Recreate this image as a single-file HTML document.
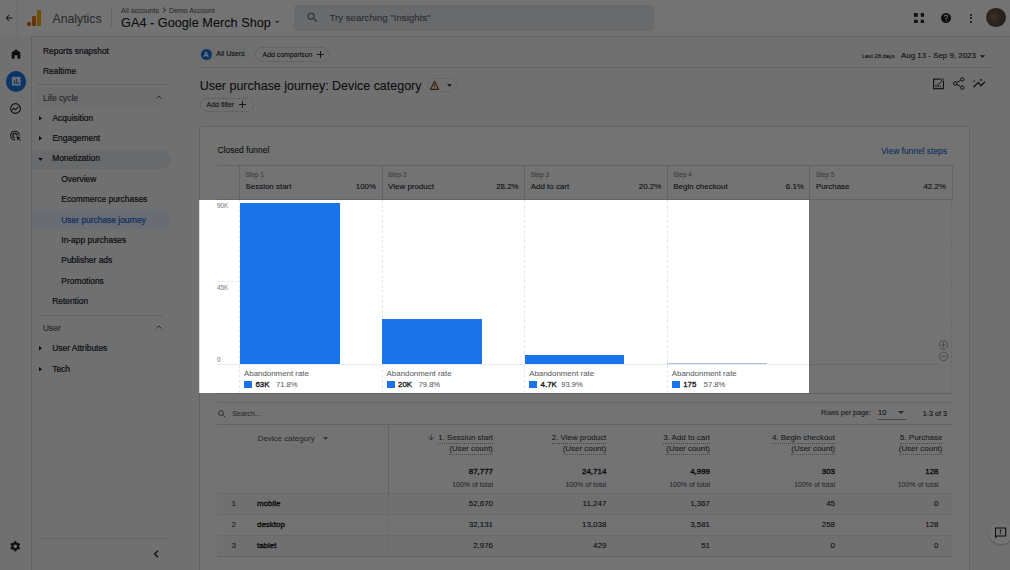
<!DOCTYPE html>
<html><head><meta charset="utf-8"><style>
html,body{margin:0;padding:0;width:1010px;height:570px;overflow:hidden;font-family:"Liberation Sans", sans-serif;}
.t{position:absolute;line-height:1;white-space:nowrap;-webkit-text-stroke:0.08px currentColor;}
.s{-webkit-text-stroke:0.2px currentColor;}
.m{-webkit-text-stroke:0.35px currentColor;}
.r{position:absolute;}
svg.r{display:block;}
</style></head><body>
<div class="r" style="left:0px;top:0px;width:1010px;height:570px;background:#f8f9fa"></div>
<div class="r" style="left:0px;top:0px;width:1010px;height:36.8px;background:#fff;border-bottom:1px solid #dadce0;box-sizing:border-box"></div>
<div class="r" style="left:17px;top:0px;width:1px;height:36px;background:#e8eaed"></div>
<div class="r" style="left:111px;top:9px;width:1px;height:18px;background:#dadce0"></div>
<div class="r" style="left:0px;top:36px;width:31px;height:534px;background:#f8f9fa"></div>
<div class="r" style="left:31px;top:36px;width:1px;height:534px;background:#dadce0"></div>
<svg class="r" style="left:4px;top:13px" width="10" height="10" viewBox="0 0 24 24"><path d="M20 11H7.83l5.59-5.59L12 4l-8 8 8 8 1.41-1.41L7.83 13H20v-2z" fill="#202124"/></svg>
<div class="r" style="left:26.8px;top:22px;width:3.8px;height:3.8px;background:#e37400;border-radius:1.2px"></div>
<div class="r" style="left:32px;top:15.8px;width:3.8px;height:10px;background:#e37400;border-radius:1.2px"></div>
<div class="r" style="left:37.4px;top:9.5px;width:3.8px;height:16.3px;background:#f9ab00;border-radius:1.2px"></div>
<div class="t " style="left:52.5px;top:12.63px;font-size:12.25px;color:#5f6368;font-weight:400;">Analytics</div>
<div class="t " style="left:121px;top:6.62px;font-size:7.07px;color:#5f6368;font-weight:400;">All accounts</div>
<svg class="r" style="left:161.5px;top:7px" width="5" height="6" viewBox="0 0 5 6"><path d="M1 .6L3.6 3 1 5.4" fill="none" stroke="#3c4043" stroke-width="1"/></svg>
<div class="t " style="left:168.9px;top:6.64px;font-size:7.04px;color:#5f6368;font-weight:400;">Demo Account</div>
<div class="t " style="left:121px;top:16.82px;font-size:12.73px;color:#202124;font-weight:400;">GA4 - Google Merch Shop</div>
<svg class="r" style="left:274.8px;top:21.2px" width="4.6" height="2.4" viewBox="0 0 10 5"><path d="M0 0l5 5 5-5z" fill="#5f6368"/></svg>
<div class="r" style="left:294px;top:5px;width:359.5px;height:26px;background:#e9ebee;border-radius:4px"></div>
<svg class="r" style="left:306px;top:11px" width="13" height="13" viewBox="0 0 24 24"><path d="M15.5 14h-.79l-.28-.27A6.47 6.47 0 0 0 16 9.5 6.5 6.5 0 1 0 9.5 16c1.61 0 3.09-.59 4.23-1.57l.27.28v.79l5 4.99L20.49 19l-4.99-5zm-6 0C7.01 14 5 11.99 5 9.5S7.01 5 9.5 5 14 7.01 14 9.5 11.99 14 9.5 14z" fill="#5f6368"/></svg>
<div class="t " style="left:329.5px;top:13.32px;font-size:9.66px;color:#5f6368;font-weight:400;">Try searching "Insights"</div>
<svg class="r" style="left:913.8px;top:12.8px" width="10.5" height="10.5" viewBox="0 0 10.5 10.5"><rect x="0" y="0" width="3.8" height="3.8" fill="#2b2d30"/><rect x="6.7" y="0" width="3.8" height="3.8" fill="#2b2d30"/><rect x="0" y="6.7" width="3.8" height="3.8" fill="#2b2d30"/><rect x="6.7" y="6.7" width="3.8" height="3.8" fill="#2b2d30"/></svg>
<svg class="r" style="left:940px;top:11.5px" width="12" height="12" viewBox="0 0 24 24"><path d="M12 2C6.48 2 2 6.48 2 12s4.48 10 10 10 10-4.48 10-10S17.52 2 12 2zm1 17h-2v-2h2v2zm2.07-7.75l-.9.92C13.45 12.9 13 13.5 13 15h-2v-.5c0-1.1.45-2.1 1.17-2.83l1.24-1.26c.37-.36.59-.86.59-1.41 0-1.1-.9-2-2-2s-2 .9-2 2H8c0-2.21 1.79-4 4-4s4 1.79 4 4c0 .88-.36 1.68-.93 2.25z" fill="#202124"/></svg>
<div class="r" style="left:969.8px;top:13.5px;width:2.2px;height:2.2px;background:#202124;border-radius:50%"></div>
<div class="r" style="left:969.8px;top:17.3px;width:2.2px;height:2.2px;background:#202124;border-radius:50%"></div>
<div class="r" style="left:969.8px;top:21.1px;width:2.2px;height:2.2px;background:#202124;border-radius:50%"></div>
<div class="r" style="left:986.2px;top:7.6px;width:19.4px;height:19.4px;background:radial-gradient(circle at 40% 45%,#8a6a50 0%,#6a5040 35%,#504846 65%,#5a6068 100%);border-radius:50%;filter:blur(0.4px)"></div>
<svg class="r" style="left:9.5px;top:47.8px" width="12" height="12" viewBox="0 0 24 24"><path d="M12 2.5L3.5 9v12.5h5.5v-7h6v7h5.5V9z" fill="#202124"/></svg>
<div class="r" style="left:5.5px;top:71px;width:20.5px;height:20.5px;background:#1a73e8;border-radius:50%"></div>
<svg class="r" style="left:10.5px;top:75.5px" width="10.5" height="10.5" viewBox="0 0 24 24"><path d="M2 2h20v20H2z" fill="#e8f0fe"/><path d="M6.5 10h2.5v8H6.5zm4.5-4h2.5v12H11zm4.5 8.5H18V18h-2.5z" fill="#1a73e8"/></svg>
<svg class="r" style="left:9px;top:102px" width="13" height="13" viewBox="0 0 24 24"><path d="M12 2a10 10 0 1 0 0 20 10 10 0 0 0 0-20zm0 18a8 8 0 1 1 0-16 8 8 0 0 1 0 16z" fill="#202124"/><path d="M5 14l4-4 3 3 5-5 1.4 1.4L12 15.8l-3-3-2.6 2.6z" fill="#202124"/></svg>
<svg class="r" style="left:9px;top:129px" width="13" height="13" viewBox="0 0 24 24"><path d="M11 21a9 9 0 1 1 9-9h-2a7 7 0 1 0-7 7zm0-4a5 5 0 1 1 5-5h-2a3 3 0 1 0-3 3zm3-4l8 3-3.5 1.5L22 21l-1 1-3.5-3.5L16 22z" fill="#202124"/></svg>
<svg class="r" style="left:9.3px;top:540.3px" width="12.5" height="12.5" viewBox="0 0 24 24"><path d="M19.14 12.94c.04-.3.06-.61.06-.94 0-.32-.02-.64-.07-.94l2.03-1.58a.49.49 0 0 0 .12-.61l-1.92-3.32a.488.488 0 0 0-.59-.22l-2.39.96c-.5-.38-1.03-.7-1.62-.94l-.36-2.54a.484.484 0 0 0-.48-.41h-3.84c-.24 0-.43.17-.47.41l-.36 2.54c-.59.24-1.13.57-1.62.94l-2.39-.96c-.22-.08-.47 0-.59.22L2.74 8.87c-.12.21-.08.47.12.61l2.03 1.58c-.05.3-.09.63-.09.94s.02.64.07.94l-2.03 1.58a.49.49 0 0 0-.12.61l1.92 3.32c.12.22.37.29.59.22l2.39-.96c.5.38 1.03.7 1.62.94l.36 2.54c.05.24.24.41.48.41h3.84c.24 0 .44-.17.47-.41l.36-2.54c.59-.24 1.13-.56 1.62-.94l2.39.96c.22.08.47 0 .59-.22l1.92-3.32c.12-.22.07-.47-.12-.61l-2.01-1.58zM12 15.6c-1.98 0-3.6-1.62-3.6-3.6s1.62-3.6 3.6-3.6 3.6 1.62 3.6 3.6-1.62 3.6-3.6 3.6z" fill="#202124"/></svg>
<div class="t s" style="left:43px;top:46.67px;font-size:8.42px;color:#202124;font-weight:400;">Reports snapshot</div>
<div class="t s" style="left:43px;top:67.07px;font-size:8.42px;color:#202124;font-weight:400;">Realtime</div>
<div class="r" style="left:37px;top:84px;width:130px;height:1px;background:#dadce0"></div>
<div class="r" style="left:35px;top:88px;width:135px;height:19px;background:#f3f4f5;border-radius:0 10px 10px 0"></div>
<div class="t s" style="left:43px;top:93.87px;font-size:8.42px;color:#5f6368;font-weight:400;">Life cycle</div>
<svg class="r" style="left:155.5px;top:95px" width="6" height="4" viewBox="0 0 6 4"><path d="M.5 3.5L3 1l2.5 2.5" fill="none" stroke="#5f6368" stroke-width="1"/></svg>
<svg class="r" style="left:39.0px;top:116.0px" width="3" height="4.5" viewBox="0 0 3 4.5"><path d="M0 0l3 2.25-3 2.25z" fill="#202124"/></svg>
<div class="t s" style="left:52.5px;top:113.87px;font-size:8.42px;color:#202124;font-weight:400;">Acquisition</div>
<svg class="r" style="left:39.0px;top:136.0px" width="3" height="4.5" viewBox="0 0 3 4.5"><path d="M0 0l3 2.25-3 2.25z" fill="#202124"/></svg>
<div class="t s" style="left:52.5px;top:134.17px;font-size:8.42px;color:#202124;font-weight:400;">Engagement</div>
<div class="r" style="left:32px;top:149.5px;width:138.5px;height:19.5px;background:#e8eaed;border-radius:0 10px 10px 0"></div>
<svg class="r" style="left:37.7px;top:157.5px" width="5" height="3" viewBox="0 0 5 3"><path d="M0 0h5L2.5 2.8z" fill="#202124"/></svg>
<div class="t s" style="left:52.2px;top:154.27px;font-size:8.42px;color:#202124;font-weight:400;">Monetization</div>
<div class="t s" style="left:61.3px;top:174.67px;font-size:8.42px;color:#202124;font-weight:400;">Overview</div>
<div class="t s" style="left:61.3px;top:195.17px;font-size:8.42px;color:#202124;font-weight:400;">Ecommerce purchases</div>
<div class="r" style="left:32px;top:209.3px;width:138.5px;height:19.5px;background:#e8f0fe;border-radius:0 10px 10px 0"></div>
<div class="t s" style="left:61.3px;top:215.67px;font-size:8.42px;color:#1967d2;font-weight:400;">User purchase journey</div>
<div class="t s" style="left:61.3px;top:236.07px;font-size:8.42px;color:#202124;font-weight:400;">In-app purchases</div>
<div class="t s" style="left:61.3px;top:256.37px;font-size:8.42px;color:#202124;font-weight:400;">Publisher ads</div>
<div class="t s" style="left:61.3px;top:276.87px;font-size:8.42px;color:#202124;font-weight:400;">Promotions</div>
<div class="t s" style="left:52.2px;top:297.17px;font-size:8.42px;color:#202124;font-weight:400;">Retention</div>
<div class="r" style="left:40px;top:314.5px;width:123px;height:1px;background:#dadce0"></div>
<div class="t s" style="left:43px;top:323.87px;font-size:8.42px;color:#5f6368;font-weight:400;">User</div>
<svg class="r" style="left:155.5px;top:325.3px" width="6" height="4" viewBox="0 0 6 4"><path d="M.5 3.5L3 1l2.5 2.5" fill="none" stroke="#5f6368" stroke-width="1"/></svg>
<svg class="r" style="left:39.0px;top:346.0px" width="3" height="4.5" viewBox="0 0 3 4.5"><path d="M0 0l3 2.25-3 2.25z" fill="#202124"/></svg>
<div class="t s" style="left:52.2px;top:344.27px;font-size:8.42px;color:#202124;font-weight:400;">User Attributes</div>
<svg class="r" style="left:39.0px;top:366.5px" width="3" height="4.5" viewBox="0 0 3 4.5"><path d="M0 0l3 2.25-3 2.25z" fill="#202124"/></svg>
<div class="t s" style="left:52.2px;top:364.67px;font-size:8.42px;color:#202124;font-weight:400;">Tech</div>
<div class="r" style="left:40px;top:538px;width:128px;height:1px;background:#dadce0"></div>
<svg class="r" style="left:153px;top:549.8px" width="6" height="8" viewBox="0 0 6 8"><path d="M5 .7L1.6 4 5 7.3" fill="none" stroke="#202124" stroke-width="1.3"/></svg>
<div class="r" style="left:198px;top:47px;width:52px;height:14.5px;background:#f1f3f4;border-radius:8px"></div>
<div class="r" style="left:200.5px;top:49px;width:11px;height:11px;background:#1a73e8;border-radius:50%"></div>
<div class="t " style="left:203.2px;top:50.85px;font-size:7.5px;color:#fff;font-weight:700;">A</div>
<div class="t " style="left:216.3px;top:51.49px;font-size:7.1px;color:#202124;font-weight:400;">All Users</div>
<div class="r" style="left:255px;top:47px;width:73.5px;height:14.5px;border:1px dotted #bdc1c6;border-radius:8px;box-sizing:border-box"></div>
<div class="t " style="left:262.6px;top:51.96px;font-size:6.9px;color:#202124;font-weight:400;">Add comparison</div>
<svg class="r" style="left:316px;top:50px" width="9" height="9" viewBox="0 0 9 9"><path d="M4.5 1v7M1 4.5h7" stroke="#202124" stroke-width=".9"/></svg>
<div class="t " style="left:861.9px;top:53.57px;font-size:5.82px;color:#202124;font-weight:400;">Last 28 days</div>
<div class="t " style="left:901px;top:52.49px;font-size:7.93px;color:#202124;font-weight:400;">Aug 13 - Sep 9, 2023</div>
<svg class="r" style="left:980px;top:54.5px" width="5" height="3" viewBox="0 0 10 5"><path d="M0 0l5 5 5-5z" fill="#202124"/></svg>
<div class="r" style="left:198px;top:66.5px;width:793px;height:1px;background:#dadce0"></div>
<div class="t " style="left:199.7px;top:80.24px;font-size:12.48px;color:#202124;font-weight:400;">User purchase journey: Device category</div>
<div class="r" style="left:426.5px;top:77.5px;width:30.5px;height:14.5px;border:1px solid #e3e5e8;border-radius:7px;box-sizing:border-box"></div>
<svg class="r" style="left:428px;top:79px" width="13" height="12" viewBox="428 79 13 12"><path d="M434.6 81.2L430.6 89.3h8z" fill="#f6efe6" stroke="#8a4f1a" stroke-width="1.2" stroke-linejoin="round"/><path d="M434.6 84.2v2.6M434.6 87.5v.8" stroke="#8a4f1a" stroke-width="1"/></svg>
<svg class="r" style="left:446.7px;top:84px" width="5" height="3" viewBox="0 0 10 5"><path d="M0 0l5 5 5-5z" fill="#202124"/></svg>
<div class="r" style="left:199.7px;top:97.7px;width:54px;height:14px;border:1px dotted #bdc1c6;border-radius:8px;box-sizing:border-box"></div>
<div class="t " style="left:206.5px;top:101.27px;font-size:7.0px;color:#202124;font-weight:400;">Add filter</div>
<svg class="r" style="left:238px;top:100px" width="9" height="9" viewBox="0 0 9 9"><path d="M4.5 1v7M1 4.5h7" stroke="#202124" stroke-width=".9"/></svg>
<svg class="r" style="left:925px;top:70px" width="70" height="28" viewBox="925 70 70 28"><rect x="933.6" y="79.1" width="9.8" height="9.6" fill="none" stroke="#202124" stroke-width="1.1"/><path d="M936 87.2v-2.6M938.2 87.2v-4M940.4 87.2v-1.4" stroke="#202124" stroke-width="1"/><path d="M938.6 84.2L943.8 78.4" stroke="#f8f9fa" stroke-width="2.4"/><path d="M938.9 84L943.8 78.5" stroke="#202124" stroke-width="1"/><path d="M960.6 80.4L956.9 82.5M956.9 84.5L960.6 86.6" stroke="#202124" stroke-width="1"/><circle cx="962.3" cy="79.4" r="1.7" fill="none" stroke="#202124" stroke-width="1"/><circle cx="955.2" cy="83.5" r="1.7" fill="none" stroke="#202124" stroke-width="1"/><circle cx="962.3" cy="87.6" r="1.7" fill="none" stroke="#202124" stroke-width="1"/><path d="M973.5 87.3L978.4 82.4L981 85.8L985 81.6" fill="none" stroke="#202124" stroke-width="1.3"/><path d="M974.2 80.3v1.6M973.4 81.1h1.6" stroke="#202124" stroke-width=".6"/><path d="M981.1 78.8v2.4M979.9 80h2.4" stroke="#202124" stroke-width=".8"/></svg>
<div class="r" style="left:199px;top:126px;width:770.5px;height:460px;background:#fff;border:1px solid #dadce0;border-radius:3px;box-sizing:border-box"></div>
<div class="t " style="left:217.4px;top:146.30px;font-size:8.5px;color:#202124;font-weight:400;">Closed funnel</div>
<div class="t " style="right:63px;top:146.66px;font-size:8.44px;color:#1967d2;font-weight:400;">View funnel steps</div>
<div class="r" style="left:216.6px;top:165px;width:735.5px;height:1px;background:#dadce0"></div>
<div class="r" style="left:216.6px;top:199px;width:735.5px;height:1px;background:#dadce0"></div>
<div class="r" style="left:239px;top:165px;width:1px;height:34px;background:#dadce0"></div>
<div class="r" style="left:381.6px;top:165px;width:1px;height:34px;background:#dadce0"></div>
<div class="r" style="left:524.2px;top:165px;width:1px;height:34px;background:#dadce0"></div>
<div class="r" style="left:666.8px;top:165px;width:1px;height:34px;background:#dadce0"></div>
<div class="r" style="left:809.4px;top:165px;width:1px;height:34px;background:#dadce0"></div>
<div class="r" style="left:951.5px;top:165px;width:1px;height:34px;background:#dadce0"></div>
<div class="t " style="left:245.5px;top:172.38px;font-size:6.4px;color:#80868b;font-weight:400;">Step 1</div>
<div class="t " style="left:245.5px;top:182.86px;font-size:7.96px;color:#202124;font-weight:400;">Session start</div>
<div class="t " style="right:633.9px;top:182.86px;font-size:7.96px;color:#202124;font-weight:400;">100%</div>
<div class="t " style="left:388.1px;top:172.38px;font-size:6.4px;color:#80868b;font-weight:400;">Step 2</div>
<div class="t " style="left:388.1px;top:182.86px;font-size:7.96px;color:#202124;font-weight:400;">View product</div>
<div class="t " style="right:491.29999999999995px;top:182.86px;font-size:7.96px;color:#202124;font-weight:400;">28.2%</div>
<div class="t " style="left:530.7px;top:172.38px;font-size:6.4px;color:#80868b;font-weight:400;">Step 3</div>
<div class="t " style="left:530.7px;top:182.86px;font-size:7.96px;color:#202124;font-weight:400;">Add to cart</div>
<div class="t " style="right:348.70000000000005px;top:182.86px;font-size:7.96px;color:#202124;font-weight:400;">20.2%</div>
<div class="t " style="left:673.3px;top:172.38px;font-size:6.4px;color:#80868b;font-weight:400;">Step 4</div>
<div class="t " style="left:673.3px;top:182.86px;font-size:7.96px;color:#202124;font-weight:400;">Begin checkout</div>
<div class="t " style="right:206.10000000000002px;top:182.86px;font-size:7.96px;color:#202124;font-weight:400;">6.1%</div>
<div class="t " style="left:815.9px;top:172.38px;font-size:6.4px;color:#80868b;font-weight:400;">Step 5</div>
<div class="t " style="left:815.9px;top:182.86px;font-size:7.96px;color:#202124;font-weight:400;">Purchase</div>
<div class="t " style="right:64.0px;top:182.86px;font-size:7.96px;color:#202124;font-weight:400;">42.2%</div>
<div class="r" style="left:239px;top:200px;width:0px;height:193px;border-left:1px dashed #e6e8eb"></div>
<div class="r" style="left:381.6px;top:200px;width:0px;height:193px;border-left:1px dashed #e6e8eb"></div>
<div class="r" style="left:524.2px;top:200px;width:0px;height:193px;border-left:1px dashed #e6e8eb"></div>
<div class="r" style="left:666.8px;top:200px;width:0px;height:193px;border-left:1px dashed #e6e8eb"></div>
<div class="r" style="left:809.4px;top:200px;width:0px;height:193px;border-left:1px dashed #e6e8eb"></div>
<div class="r" style="left:951px;top:200px;width:0px;height:193px;border-left:1px dashed #e6e8eb"></div>
<div class="r" style="left:216.6px;top:392.5px;width:736px;height:1px;background:#dadce0"></div>
<div class="r" style="left:216.6px;top:364px;width:722px;height:1px;background:#e8eaed"></div>
<div class="r" style="left:216.6px;top:281.4px;width:22px;height:0px;border-top:1px dashed #e6e8eb"></div>
<div class="t " style="left:217px;top:203.38px;font-size:6.4px;color:#80868b;font-weight:400;">90K</div>
<div class="t " style="left:217px;top:285.38px;font-size:6.4px;color:#80868b;font-weight:400;">45K</div>
<div class="t " style="left:217px;top:357.38px;font-size:6.4px;color:#80868b;font-weight:400;">0</div>
<div class="r" style="left:240px;top:203.4px;width:99.5px;height:160.6px;background:#1a73e8"></div>
<div class="r" style="left:382.2px;top:318.8px;width:99.5px;height:45.19999999999999px;background:#1a73e8"></div>
<div class="r" style="left:524.8px;top:355.3px;width:99.5px;height:8.699999999999989px;background:#1a73e8"></div>
<div class="r" style="left:667.4px;top:363px;width:99.5px;height:1px;background:#a8c3ea"></div>
<div class="t " style="left:244px;top:370.31px;font-size:7.9px;color:#5f6368;font-weight:400;">Abandonment rate</div>
<div class="r" style="left:244px;top:380.6px;width:8px;height:7.6px;background:#1a73e8"></div>
<div class="t m" style="left:255.4px;top:381.11px;font-size:7.9px;color:#202124;font-weight:400;">63K</div>
<div class="t " style="left:276px;top:381.37px;font-size:7.6px;color:#5f6368;font-weight:400;">71.8%</div>
<div class="t " style="left:386.6px;top:370.31px;font-size:7.9px;color:#5f6368;font-weight:400;">Abandonment rate</div>
<div class="r" style="left:386.6px;top:380.6px;width:8px;height:7.6px;background:#1a73e8"></div>
<div class="t m" style="left:398.0px;top:381.11px;font-size:7.9px;color:#202124;font-weight:400;">20K</div>
<div class="t " style="left:418.6px;top:381.37px;font-size:7.6px;color:#5f6368;font-weight:400;">79.8%</div>
<div class="t " style="left:529.2px;top:370.31px;font-size:7.9px;color:#5f6368;font-weight:400;">Abandonment rate</div>
<div class="r" style="left:529.2px;top:380.6px;width:8px;height:7.6px;background:#1a73e8"></div>
<div class="t m" style="left:540.6px;top:381.11px;font-size:7.9px;color:#202124;font-weight:400;">4.7K</div>
<div class="t " style="left:561.2px;top:381.37px;font-size:7.6px;color:#5f6368;font-weight:400;">93.9%</div>
<div class="t " style="left:671.8px;top:370.31px;font-size:7.9px;color:#5f6368;font-weight:400;">Abandonment rate</div>
<div class="r" style="left:671.8px;top:380.6px;width:8px;height:7.6px;background:#1a73e8"></div>
<div class="t m" style="left:683.1999999999999px;top:381.11px;font-size:7.9px;color:#202124;font-weight:400;">175</div>
<div class="t " style="left:703.8px;top:381.37px;font-size:7.6px;color:#5f6368;font-weight:400;">57.8%</div>
<svg class="r" style="left:937px;top:339px" width="13" height="24" viewBox="937 339 13 24"><circle cx="943.5" cy="345" r="4.2" fill="none" stroke="#9aa0a6" stroke-width=".9"/><circle cx="943.5" cy="356.4" r="4.2" fill="none" stroke="#9aa0a6" stroke-width=".9"/><path d="M941 345h5M943.5 342.5v5M941 356.4h5" stroke="#9aa0a6" stroke-width=".9"/></svg>
<div class="r" style="left:217px;top:402px;width:735px;height:1px;background:#e3e5e8"></div>
<svg class="r" style="left:217px;top:409px" width="10" height="10" viewBox="0 0 24 24"><path d="M15.5 14h-.79l-.28-.27A6.47 6.47 0 0 0 16 9.5 6.5 6.5 0 1 0 9.5 16c1.61 0 3.09-.59 4.23-1.57l.27.28v.79l5 4.99L20.49 19l-4.99-5zm-6 0C7.01 14 5 11.99 5 9.5S7.01 5 9.5 5 14 7.01 14 9.5 11.99 14 9.5 14z" fill="#5f6368"/></svg>
<div class="t " style="left:232.2px;top:409.61px;font-size:7.2px;color:#5f6368;font-weight:400;">Search...</div>
<div class="t " style="left:821px;top:409.96px;font-size:7.14px;color:#3c4043;font-weight:400;">Rows per page:</div>
<div class="t " style="left:878px;top:408.85px;font-size:7.5px;color:#202124;font-weight:400;">10</div>
<svg class="r" style="left:897.5px;top:410.5px" width="6" height="3" viewBox="0 0 10 5"><path d="M0 0l5 5 5-5z" fill="#5f6368"/></svg>
<div class="r" style="left:877.5px;top:419px;width:28px;height:1px;background:#9aa0a6"></div>
<div class="t " style="right:63px;top:409.61px;font-size:7.2px;color:#202124;font-weight:400;">1-3 of 3</div>
<div class="r" style="left:217px;top:424px;width:735px;height:1px;background:#dadce0"></div>
<div class="r" style="left:388px;top:424px;width:1px;height:131.5px;background:#dadce0"></div>
<div class="t " style="left:257.7px;top:434.57px;font-size:7.95px;color:#5f6368;font-weight:400;">Device category</div>
<svg class="r" style="left:322.5px;top:437px" width="5" height="3" viewBox="0 0 10 5"><path d="M0 0l5 5 5-5z" fill="#5f6368"/></svg>
<div class="t " style="right:517px;top:434.08px;font-size:7.94px;color:#3c4043;font-weight:400;padding-bottom:1px;border-bottom:1px dotted #9aa0a6">1. Session start</div>
<div class="t " style="right:517px;top:445.18px;font-size:7.94px;color:#3c4043;font-weight:400;padding-bottom:1px;border-bottom:1px dotted #9aa0a6">(User count)</div>
<div class="t " style="right:403.70000000000005px;top:434.08px;font-size:7.94px;color:#3c4043;font-weight:400;padding-bottom:1px;border-bottom:1px dotted #9aa0a6">2. View product</div>
<div class="t " style="right:403.70000000000005px;top:445.18px;font-size:7.94px;color:#3c4043;font-weight:400;padding-bottom:1px;border-bottom:1px dotted #9aa0a6">(User count)</div>
<div class="t " style="right:300px;top:434.08px;font-size:7.94px;color:#3c4043;font-weight:400;padding-bottom:1px;border-bottom:1px dotted #9aa0a6">3. Add to cart</div>
<div class="t " style="right:300px;top:445.18px;font-size:7.94px;color:#3c4043;font-weight:400;padding-bottom:1px;border-bottom:1px dotted #9aa0a6">(User count)</div>
<div class="t " style="right:175px;top:434.08px;font-size:7.94px;color:#3c4043;font-weight:400;padding-bottom:1px;border-bottom:1px dotted #9aa0a6">4. Begin checkout</div>
<div class="t " style="right:175px;top:445.18px;font-size:7.94px;color:#3c4043;font-weight:400;padding-bottom:1px;border-bottom:1px dotted #9aa0a6">(User count)</div>
<div class="t " style="right:67.60000000000002px;top:434.08px;font-size:7.94px;color:#3c4043;font-weight:400;padding-bottom:1px;border-bottom:1px dotted #9aa0a6">5. Purchase</div>
<div class="t " style="right:67.60000000000002px;top:445.18px;font-size:7.94px;color:#3c4043;font-weight:400;padding-bottom:1px;border-bottom:1px dotted #9aa0a6">(User count)</div>
<svg class="r" style="left:426.5px;top:432.8px" width="8.5" height="9" viewBox="0 0 24 24"><path d="M20 12l-1.41-1.41L13 16.17V4h-2v12.17l-5.58-5.59L4 12l8 8 8-8z" fill="#5f6368"/></svg>
<div class="t m" style="right:517px;top:467.98px;font-size:7.94px;color:#202124;font-weight:400;">87,777</div>
<div class="t " style="right:517px;top:481.17px;font-size:7.0px;color:#5f6368;font-weight:400;">100% of total</div>
<div class="t m" style="right:403.70000000000005px;top:467.98px;font-size:7.94px;color:#202124;font-weight:400;">24,714</div>
<div class="t " style="right:403.70000000000005px;top:481.17px;font-size:7.0px;color:#5f6368;font-weight:400;">100% of total</div>
<div class="t m" style="right:300px;top:467.98px;font-size:7.94px;color:#202124;font-weight:400;">4,999</div>
<div class="t " style="right:300px;top:481.17px;font-size:7.0px;color:#5f6368;font-weight:400;">100% of total</div>
<div class="t m" style="right:175px;top:467.98px;font-size:7.94px;color:#202124;font-weight:400;">303</div>
<div class="t " style="right:175px;top:481.17px;font-size:7.0px;color:#5f6368;font-weight:400;">100% of total</div>
<div class="t m" style="right:71.5px;top:467.98px;font-size:7.94px;color:#202124;font-weight:400;">128</div>
<div class="t " style="right:71.5px;top:481.17px;font-size:7.0px;color:#5f6368;font-weight:400;">100% of total</div>
<div class="r" style="left:217px;top:492.5px;width:735px;height:21px;background:#f8f9fa"></div>
<div class="r" style="left:217px;top:535px;width:735px;height:21px;background:#f8f9fa"></div>
<div class="r" style="left:217px;top:492.5px;width:735px;height:1px;background:#e8eaed"></div>
<div class="r" style="left:217px;top:513.5px;width:735px;height:1px;background:#e8eaed"></div>
<div class="r" style="left:217px;top:535px;width:735px;height:1px;background:#e8eaed"></div>
<div class="r" style="left:217px;top:555.5px;width:735px;height:1px;background:#dadce0"></div>
<div class="r" style="left:388px;top:492.5px;width:1px;height:63px;background:#e8eaed"></div>
<div class="t " style="left:231.5px;top:499.78px;font-size:7.94px;color:#3c4043;font-weight:400;">1</div>
<div class="t m" style="left:257px;top:499.78px;font-size:7.94px;color:#202124;font-weight:400;">mobile</div>
<div class="t " style="right:517px;top:499.78px;font-size:7.94px;color:#202124;font-weight:400;">52,670</div>
<div class="t " style="right:403.70000000000005px;top:499.78px;font-size:7.94px;color:#202124;font-weight:400;">11,247</div>
<div class="t " style="right:300px;top:499.78px;font-size:7.94px;color:#202124;font-weight:400;">1,367</div>
<div class="t " style="right:175px;top:499.78px;font-size:7.94px;color:#202124;font-weight:400;">45</div>
<div class="t " style="right:71.5px;top:499.78px;font-size:7.94px;color:#202124;font-weight:400;">0</div>
<div class="t " style="left:231.5px;top:520.78px;font-size:7.94px;color:#3c4043;font-weight:400;">2</div>
<div class="t m" style="left:257px;top:520.78px;font-size:7.94px;color:#202124;font-weight:400;">desktop</div>
<div class="t " style="right:517px;top:520.78px;font-size:7.94px;color:#202124;font-weight:400;">32,131</div>
<div class="t " style="right:403.70000000000005px;top:520.78px;font-size:7.94px;color:#202124;font-weight:400;">13,038</div>
<div class="t " style="right:300px;top:520.78px;font-size:7.94px;color:#202124;font-weight:400;">3,581</div>
<div class="t " style="right:175px;top:520.78px;font-size:7.94px;color:#202124;font-weight:400;">258</div>
<div class="t " style="right:71.5px;top:520.78px;font-size:7.94px;color:#202124;font-weight:400;">128</div>
<div class="t " style="left:231.5px;top:541.78px;font-size:7.94px;color:#3c4043;font-weight:400;">3</div>
<div class="t m" style="left:257px;top:541.78px;font-size:7.94px;color:#202124;font-weight:400;">tablet</div>
<div class="t " style="right:517px;top:541.78px;font-size:7.94px;color:#202124;font-weight:400;">2,976</div>
<div class="t " style="right:403.70000000000005px;top:541.78px;font-size:7.94px;color:#202124;font-weight:400;">429</div>
<div class="t " style="right:300px;top:541.78px;font-size:7.94px;color:#202124;font-weight:400;">51</div>
<div class="t " style="right:175px;top:541.78px;font-size:7.94px;color:#202124;font-weight:400;">0</div>
<div class="t " style="right:71.5px;top:541.78px;font-size:7.94px;color:#202124;font-weight:400;">0</div>
<div class="r" style="left:989px;top:522.3px;width:24px;height:22px;background:#fff;border-radius:11px;box-shadow:0 1px 2px rgba(0,0,0,.25)"></div>
<svg class="r" style="left:990px;top:520px" width="20" height="25" viewBox="990 520 20 25"><path d="M995.5 537.2V528h10.2v8h-9z" fill="none" stroke="#202124" stroke-width="1.1"/><path d="M1000.4 529.6v2.6M1000.4 533v1" stroke="#202124" stroke-width="1.1"/></svg>
<div class="r" style="left:199px;top:199.5px;width:610px;height:193.5px;box-shadow:0 0 0 3000px rgba(0,0,0,.55)"></div>
</body></html>
